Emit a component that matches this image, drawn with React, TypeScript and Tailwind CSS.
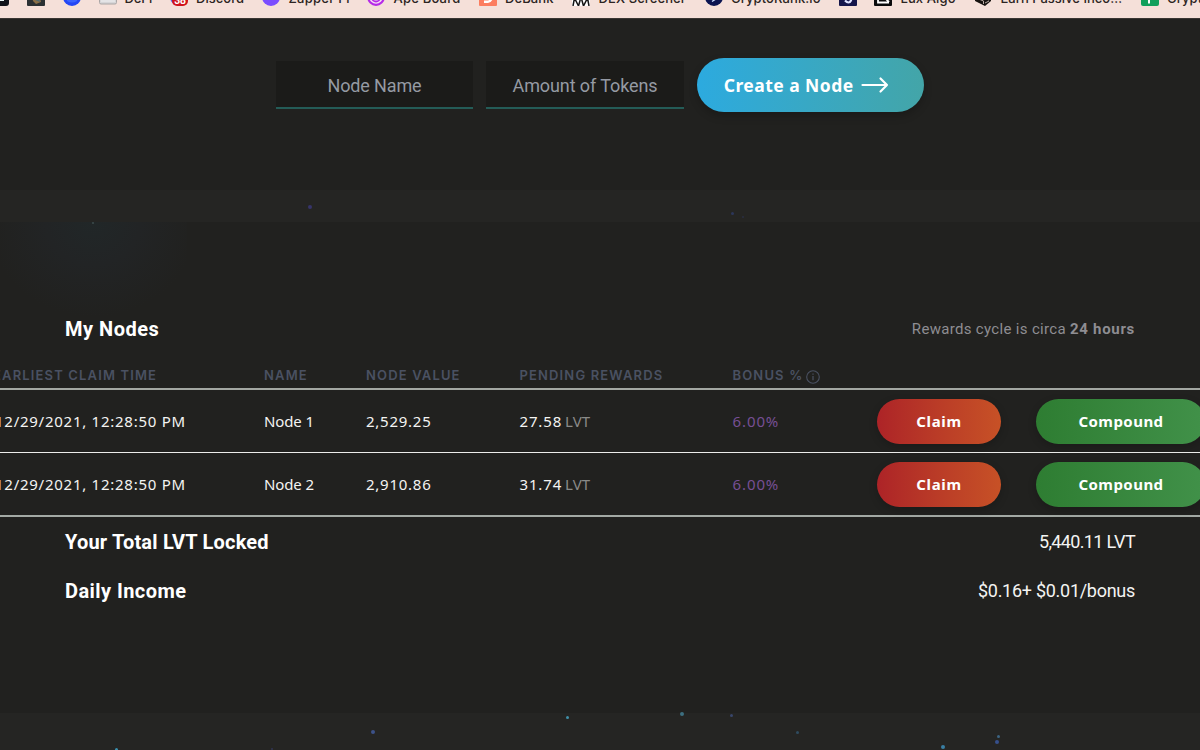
import type { ReactNode } from "react";

const Tile = ({ children }: { children?: ReactNode }) => (
  <svg width="18" height="18" viewBox="0 0 18 18" className="shrink-0">
    {children}
  </svg>
);

const bookmarks: { slot: string; label?: string; text?: string; icon: ReactNode }[] = [
  {
    slot: "w-[36px]",
    icon: (
      <Tile>
        <rect width="18" height="18" rx="3" fill="#11131a" />
        <path d="M9 3h4v10H9z" fill="#e8f4f4" />
      </Tile>
    ),
  },
  {
    slot: "w-[36px]",
    icon: (
      <Tile>
        <rect width="18" height="18" rx="1" fill="#2b3134" />
        <path d="M5 8l8 2 1 4-5 2-3-3z" fill="#8b7048" />
        <path d="M8 12l4-1 1 3z" fill="#4d6a74" />
      </Tile>
    ),
  },
  {
    slot: "w-[36px]",
    icon: (
      <Tile>
        <circle cx="9" cy="9" r="9" fill="#2447f5" />
        <path d="M4 10h10v3q-5 3-10 0z" fill="#3a64ff" />
      </Tile>
    ),
  },
  {
    slot: "w-[70.5px]",
    label: "DeFi",
    text: "-ml-px tracking-[-0.1px]",
    icon: (
      <Tile>
        <rect x="0.5" y="2" width="17" height="14" rx="1.5" fill="#d6d6d8" stroke="#aaa6a6" />
        <rect x="2" y="3" width="14" height="11" fill="#e4e4e6" />
      </Tile>
    ),
  },
  {
    slot: "w-[92.5px]",
    label: "Discord",
    text: "tracking-[0.05px]",
    icon: (
      <Tile>
        <circle cx="8" cy="9" r="8" fill="#5968ee" />
        <rect x="2" y="6" width="16" height="12" rx="5" fill="#d0141c" />
        <text x="10" y="16.3" textAnchor="middle" fontSize="10.5" fontWeight="700" fontFamily="Liberation Sans, sans-serif" fill="#fff">
          38
        </text>
      </Tile>
    ),
  },
  {
    slot: "w-[105px]",
    label: "Zapper Fi",
    text: "tracking-[0.27px]",
    icon: (
      <Tile>
        <circle cx="9" cy="9" r="9" fill="#7b4dff" />
      </Tile>
    ),
  },
  {
    slot: "w-[111.5px]",
    label: "Ape Board",
    text: "tracking-[0.2px]",
    icon: (
      <Tile>
        <circle cx="9" cy="9" r="7.8" fill="#f7ddf5" stroke="#b62be8" strokeWidth="2.2" />
        <circle cx="9" cy="9.5" r="4" fill="none" stroke="#b62be8" strokeWidth="1.8" />
      </Tile>
    ),
  },
  {
    slot: "w-[93.5px]",
    label: "DeBank",
    text: "tracking-[0.1px]",
    icon: (
      <Tile>
        <rect width="18" height="18" rx="1" fill="#fc7d5f" />
        <path d="M5 3h4q5 0 5 5.500T9 15H5v-2.600h4q2-.4 2-2t-2-1.500H5z" fill="#fff" />
      </Tile>
    ),
  },
  {
    slot: "w-[132.5px]",
    label: "DEX Screener",
    text: "tracking-[0.1px]",
    icon: (
      <Tile>
        <rect width="18" height="18" fill="#fff" />
        <path d="M1 18 2.500 10 6.500 18M6.500 18 9 9l2.500 9M11.500 18l4-8 1.500 8" fill="none" stroke="#161616" strokeWidth="1.5" />
      </Tile>
    ),
  },
  {
    slot: "w-[134px]",
    label: "CryptoRank.io",
    text: "tracking-[0.1px]",
    icon: (
      <Tile>
        <circle cx="9" cy="9" r="9" fill="#0b1451" />
        <path d="M7 13.500 10 11.500l1-3" stroke="#c9dcff" strokeWidth="1.4" fill="none" />
      </Tile>
    ),
  },
  {
    slot: "w-[35.5px]",
    icon: (
      <Tile>
        <rect width="18" height="18" rx="1" fill="#15164b" />
        <path d="M6 12.500q4 4 6 0l-1-4" stroke="#dfe3ff" strokeWidth="2.200" fill="none" />
      </Tile>
    ),
  },
  {
    slot: "w-[100px]",
    label: "Lux Algo",
    text: "tracking-[0.1px]",
    icon: (
      <Tile>
        <rect width="18" height="18" rx="1" fill="#0b0b0c" />
        <path d="M4 4v10.500h11M8 7v4h4l3 3" stroke="#fff" strokeWidth="1.800" fill="none" />
      </Tile>
    ),
  },
  {
    slot: "w-[166.5px]",
    label: "Earn Passive Inco…",
    icon: (
      <Tile>
        <path d="M9 0l8 5v8l-6 5L1 13V5z" fill="#17120f" />
        <path d="M6 11.500 9.500 13v3M12 10.500l3 1.500M11 15l4-2" stroke="#b9aaa4" strokeWidth="1" fill="none" />
      </Tile>
    ),
  },
  {
    slot: "w-[120px]",
    label: "Crypto",
    text: "tracking-[0.1px]",
    icon: (
      <Tile>
        <rect width="18" height="18" rx="2" fill="#11a05c" />
        <path d="M8 6v9.500" stroke="#fff" strokeWidth="2" />
        <path d="M4 10h9" stroke="#fff" strokeWidth="1.500" />
      </Tile>
    ),
  },
];

const particles = [
  "left-[308px] top-[205px] size-[4px] bg-[#37356a]",
  "left-[731px] top-[212px] size-[3px] bg-[#2c3659]",
  "left-[742px] top-[216px] size-[2px] bg-[#2a2e42]",
  "left-[92px] top-[222px] size-[2px] bg-[#3c4c4c]",
  "left-[566px] top-[716px] size-[3px] bg-[#3f8fa8]",
  "left-[680px] top-[712px] size-[4px] bg-[#3d6f80]",
  "left-[730px] top-[714px] size-[3px] bg-[#39466a]",
  "left-[796px] top-[731px] size-[3px] bg-[#2f4c60]",
  "left-[371px] top-[730px] size-[4px] bg-[#3d5288]",
  "left-[997px] top-[735px] size-[3px] bg-[#3c6482]",
  "left-[995px] top-[740px] size-[4px] bg-[#36508c]",
  "left-[941px] top-[745px] size-[4px] bg-[#397fa3]",
  "left-[115px] top-[748px] size-[3px] bg-[#398fae]",
  "left-[271px] top-[748px] size-[2px] bg-[#303454]",
];

const nodes = [
  { name: "Node 1", value: "2,529.25", pending: "27.58" },
  { name: "Node 2", value: "2,910.86", pending: "31.74" },
];

const columns = "grid grid-cols-[267px_102px_153.5px_213px_144.5px_159px_169px] items-center";

const InfoIcon = () => (
  <svg width="14" height="14" viewBox="0 0 14 14" className="ml-[2.5px] mt-[2px] shrink-0" fill="none" stroke="currentColor">
    <circle cx="7" cy="7" r="6.300" strokeWidth="1.100" />
    <path d="M7 6v4.300" strokeWidth="1.200" />
    <path d="M7 3.600v1.200" strokeWidth="1.200" />
  </svg>
);

const Arrow = () => (
  <svg width="28" height="18" viewBox="0 0 28 18" className="ml-[7px]" fill="none" stroke="white" strokeWidth="2.200" strokeLinecap="round" strokeLinejoin="round">
    <path d="M1.500 9h24.500M19.500 2.500 26 9l-6.500 6.500" />
  </svg>
);

function NodeInput({ placeholder, track }: { placeholder: string; track: string }) {
  return (
    <input
      placeholder={placeholder}
      className={`mt-[3px] h-[48px] w-[197.5px] border-b-2 border-[#245c57] bg-[#1b1b19] pt-[2px] text-center text-[18px] text-white outline-none placeholder:text-[#959aa3] ${track}`}
    />
  );
}

export default function App() {
  return (
    <div className="relative flex h-[750px] w-[1200px] flex-col overflow-hidden bg-[#21211f] font-[Roboto,sans-serif] text-[#f4f4f2]">
      <header className="h-[18px] shrink-0 overflow-hidden bg-[#f5e0d9]">
        <div className="-mt-[12px] -ml-[9px] flex h-[18px] w-[1400px] items-center font-[Inter,sans-serif] text-[13px] leading-[18px] font-medium text-[#2c2422]">
          {bookmarks.map((b, i) => (
            <div key={i} className={`flex shrink-0 items-center gap-[8.5px] ${b.slot}`}>
              {b.icon}
              {b.label && <span className={`pt-px whitespace-nowrap ${b.text ?? ""}`}>{b.label}</span>}
            </div>
          ))}
        </div>
      </header>

      <section className="flex h-[172px] shrink-0 items-start justify-center gap-[13px] border-t border-[#3a3633] pt-[39px]">
        <NodeInput placeholder="Node Name" track="tracking-[-0.15px]" />
        <NodeInput placeholder="Amount of Tokens" track="tracking-[-0.1px]" />
        <button className="flex h-[54px] w-[227.5px] items-center rounded-full bg-linear-to-r from-[#2caadf] to-[#43a5a8] pl-[27px] font-['Noto_Sans',sans-serif] text-[17.5px] font-bold whitespace-nowrap text-white shadow-[0_4px_8px_rgba(0,0,0,0.22)]">
          <span className="tracking-[0.45px]">Create a Node</span>
          <Arrow />
        </button>
      </section>

      <div className="h-[32px] shrink-0 bg-[#252523]" />

      <main className="h-[491px] shrink-0 bg-[radial-gradient(ellipse_105px_95px_at_93px_0px,#212728_0%,#222425_45%,#21211f_100%)] bg-[length:187px_100%] bg-no-repeat pt-[94px]">
        <div className="flex h-[26px] items-center justify-between px-[65px]">
          <h2 className="text-[20px] font-bold tracking-[0.5px] text-white">My Nodes</h2>
          <p className="text-[15px] tracking-[0.32px] text-[#8e8d92]">
            Rewards cycle is circa <b className="tracking-[0.7px]">24 hours</b>
          </p>
        </div>

        <div className="-ml-[3px] mt-[20px] w-[1208px]">
          <div
            className={`${columns} h-[28px] border-b-2 border-[#a3a7a2] pt-px font-[Inter,sans-serif] text-[13px] font-semibold tracking-[1.15px] whitespace-nowrap text-[#4a5162]`}
          >
            <span className="-ml-[4px]">EARLIEST CLAIM TIME</span>
            <span>NAME</span>
            <span>NODE VALUE</span>
            <span>PENDING REWARDS</span>
            <span className="flex items-center">
              BONUS %<InfoIcon />
            </span>
          </div>
          {nodes.map((n, i) => (
            <div
              key={n.name}
              className={`${columns} font-['Noto_Sans',sans-serif] text-[15px] whitespace-nowrap ${i === 0 ? "h-[63px] border-b border-[#ededeb]" : "h-[64px] border-b-2 border-[#a3a9a4]"}`}
            >
              <span className="-ml-[2px] tracking-[0.74px]">12/29/2021, 12:28:50 PM</span>
              <span className="tracking-[-0.13px]">{n.name}</span>
              <span className="tracking-[0.75px]">{n.value}</span>
              <span className="tracking-[0.85px]">
                {n.pending}
                <span className="ml-[3px] tracking-[0px] text-[#8a8a88]">LVT</span>
              </span>
              <span className="tracking-[0.9px] text-[#774f94]">6.00%</span>
              <button className="h-[45px] w-[124px] rounded-full bg-linear-to-r from-[#ad2327] to-[#c75126] text-[15px] font-bold tracking-[0.65px] text-white shadow-[0_3px_8px_rgba(0,0,0,0.2)]">
                Claim
              </button>
              <button className="h-[45px] w-[169px] rounded-full bg-linear-to-r from-[#2e7d32] to-[#419149] pl-px text-[15px] font-bold tracking-[0.45px] text-white shadow-[0_3px_8px_rgba(0,0,0,0.2)]">
                Compound
              </button>
            </div>
          ))}
        </div>

        <div className="flex h-[49px] items-center justify-between px-[65px]">
          <h2 className="text-[20px] font-bold tracking-[0.2px] text-white">Your Total LVT Locked</h2>
          <span className="text-[18px] tracking-[-0.65px]">5,440.11 LVT</span>
        </div>
        <div className="flex h-[49px] items-center justify-between px-[65px]">
          <h2 className="text-[20px] font-bold tracking-[0.43px] text-white">Daily Income</h2>
          <span className="text-[18px] tracking-[-0.28px]">$0.16+ $0.01/bonus</span>
        </div>
      </main>

      <div className="flex-1 bg-[#252523]" />

      {particles.map((p) => (
        <i key={p} className={`absolute rounded-full ${p}`} />
      ))}
    </div>
  );
}
